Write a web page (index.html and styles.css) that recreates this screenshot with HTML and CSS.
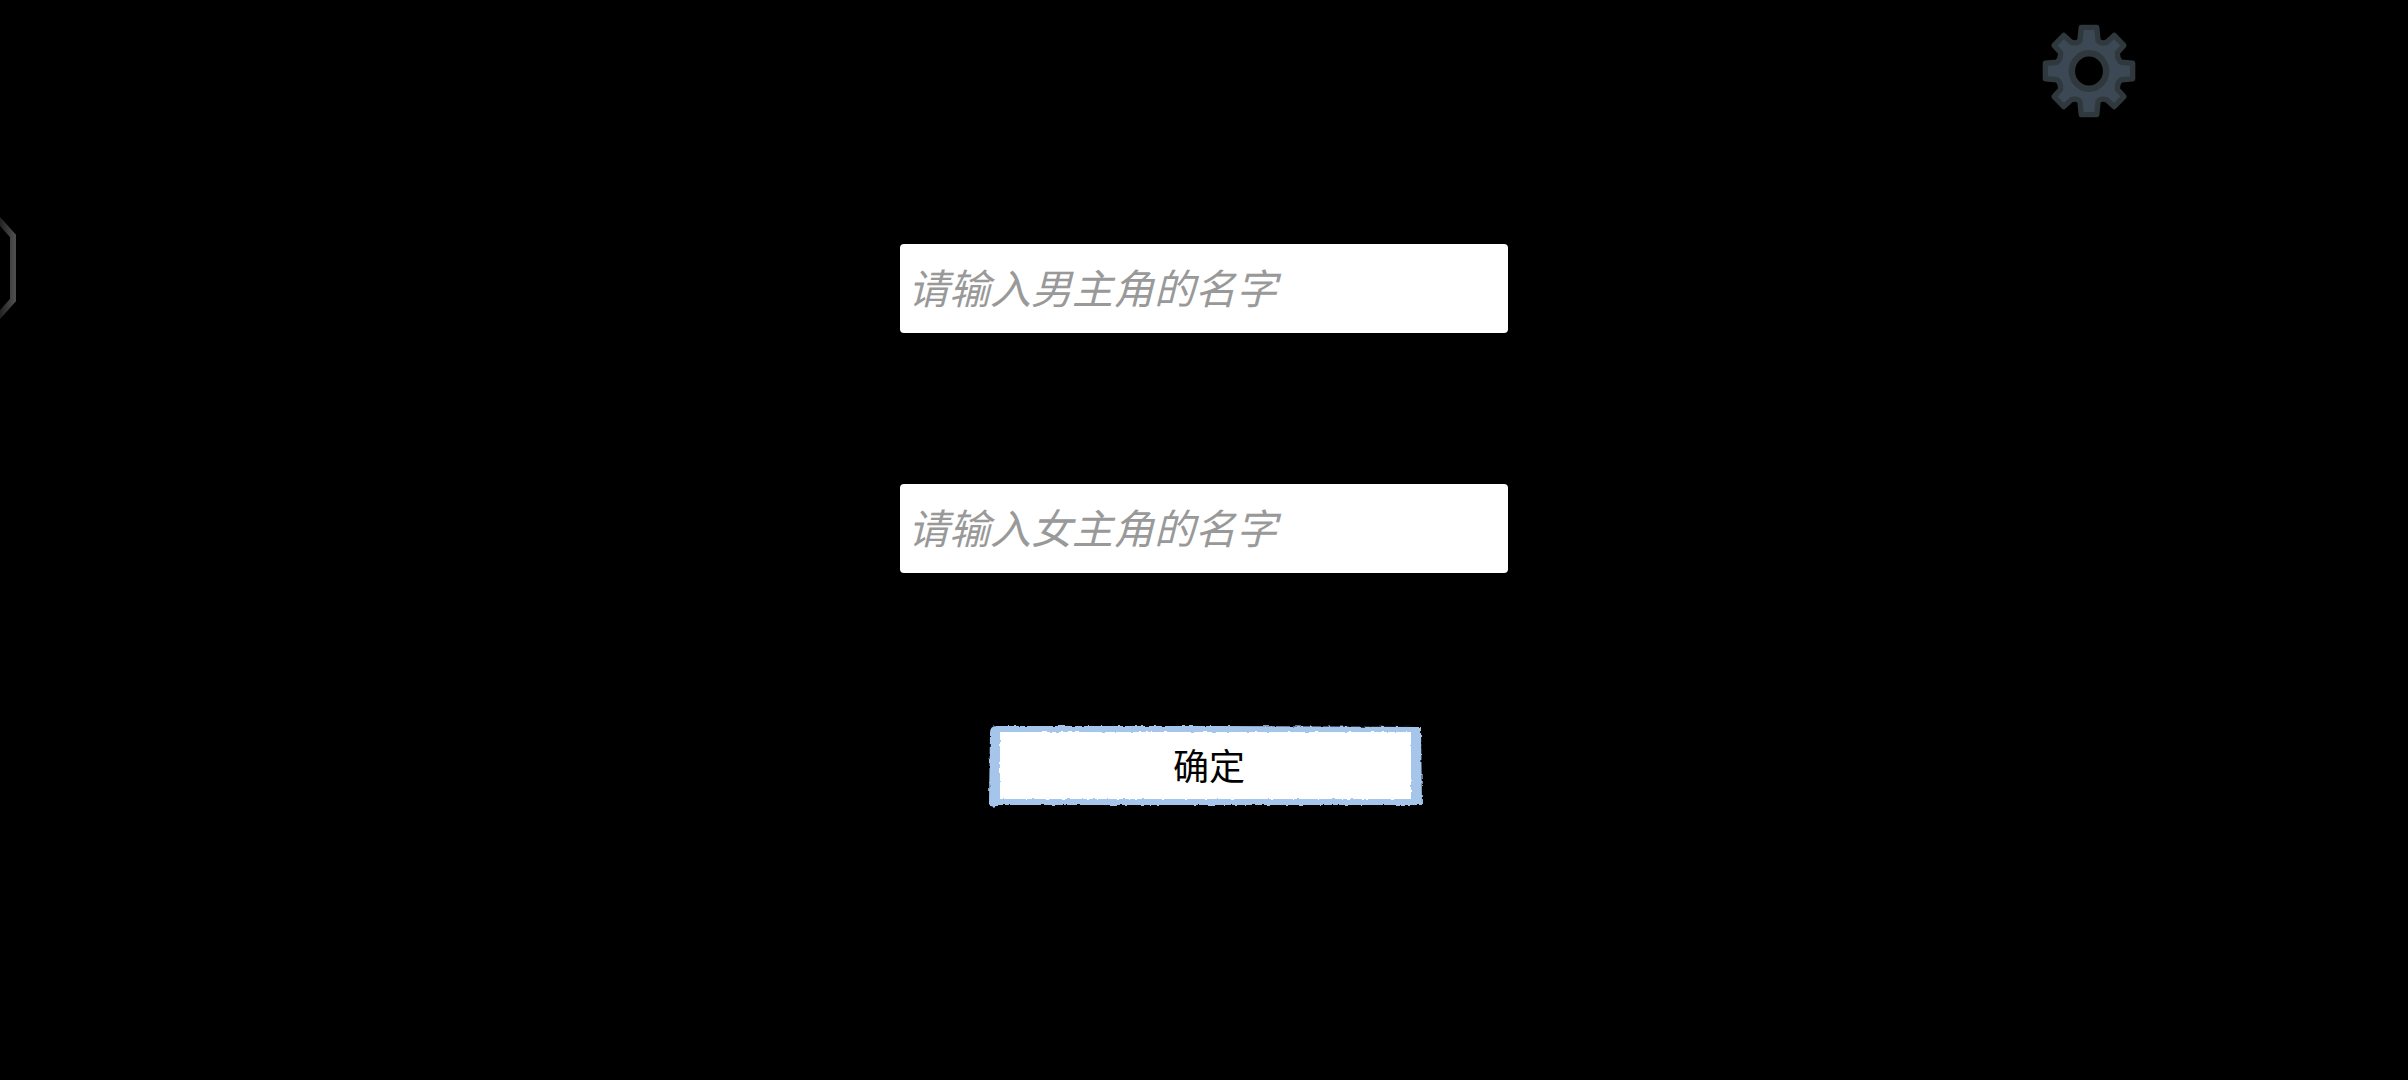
FILE: index.html
```html
<!DOCTYPE html>
<html lang="zh-CN">
<head>
    <meta charset="UTF-8">
    <meta name="viewport" content="width=device-width, initial-scale=1.0">
    <title>角色命名</title>
    <link rel="stylesheet" href="styles.css">
</head>
<body>
    <button class="settings-btn" type="button" aria-label="设置">
        <svg viewBox="-140 -140 280 280">
            <path class="gear-body" d="M-23-130 H23 L27-91 Q36-80 53-86 L75-106 L104-76 L85-55 Q83-35 96-26 L130-23 V23 L96 26 Q83 35 85 55 L104 76 L75 106 L53 86 Q36 80 27 91 L23 130 H-23 L-27 91 Q-36 80-53 86 L-75 106 L-104 76 L-85 55 Q-83 35-96 26 L-130 23 V-23 L-96-26 Q-83-35-85-55 L-104-76 L-75-106 L-53-86 Q-36-80-27-91 Z"/>
            <ellipse class="gear-hole" rx="51" ry="53"/>
        </svg>
    </button>

    <button class="side-handle" type="button" aria-label="展开菜单">
        <svg viewBox="0 0 18 108">
            <defs>
                <linearGradient id="handleFade" gradientUnits="userSpaceOnUse" x1="0" y1="0" x2="14" y2="0">
                    <stop offset="0" stop-color="#222"/>
                    <stop offset="1" stop-color="#4c4c4c"/>
                </linearGradient>
            </defs>
            <path d="M-4 3 L13 22 V86 L-4 105" fill="none" stroke="url(#handleFade)" stroke-width="6"/>
        </svg>
    </button>

    <form class="name-form">
        <input class="name-input" type="text" aria-label="男主角的名字" placeholder="请输入男主角的名字">
        <input class="name-input" type="text" aria-label="女主角的名字" placeholder="请输入女主角的名字">
        <button class="confirm-btn" type="button">
            <!-- hand-painted frame -->
            <svg class="frame" viewBox="0 0 436 84" preserveAspectRatio="none">
                <filter id="rough" x="-2%" y="-5%" width="104%" height="110%">
                    <feTurbulence type="fractalNoise" baseFrequency="0.2" numOctaves="2" seed="4"/>
                    <feDisplacementMap in="SourceGraphic" scale="3" xChannelSelector="R" yChannelSelector="G"/>
                    <feGaussianBlur stdDeviation="0.6"/>
                </filter>
                <g filter="url(#rough)">
                    <path fill="#a5c6ea" d="M10 2 Q4 2 4 9 L3 80 Q6 85 12 81 L220 81 L436 81 L435 3 L230 2 Z"/>
                    <path fill="#fff" d="M14 8 L425 8 L425 75 L14 75 Z"/>
                </g>
            </svg>
            <span class="label">确定</span>
        </button>
    </form>
</body>
</html>
```

FILE: styles.css
```css
* {
    box-sizing: border-box;
}

body {
    margin: 0;
    min-height: 100vh;
    background-color: #000;
    font-family: "Noto Sans CJK SC", sans-serif;
}

button {
    padding: 0;
    border: none;
    background: none;
    font-family: inherit;
    cursor: pointer;
}

svg {
    display: block;
    width: 100%;
    height: 100%;
}

/* Floating controls */
.settings-btn {
    position: absolute;
    top: 24px;
    right: 272px;
    width: 94px;
    height: 94px;
}

.gear-body {
    fill: #3c4854;
    stroke: #2f383d;
    stroke-width: 16;
    stroke-linejoin: round;
}

.gear-hole {
    fill: #000;
    stroke: #2f383d;
    stroke-width: 19;
}

.side-handle {
    position: absolute;
    top: 214px;
    left: 0;
    width: 18px;
    height: 108px;
}

/* Name form */
.name-form {
    display: flex;
    flex-direction: column;
    align-items: center;
    gap: 151px;
    padding: 244px 24px 24px;
}

.name-input {
    width: 100%;
    max-width: 608px;
    height: 89px;
    padding: 0 8px 6px;
    border: none;
    border-radius: 4px;
    background-color: #fff;
    color: #000;
    font-family: inherit;
    font-size: 41px;
}

.name-input::placeholder {
    color: #999;
    font-style: italic;
    opacity: 1;
}

.confirm-btn {
    position: relative;
    width: 436px;
    height: 84px;
    padding: 0 0 4px 10px;
    color: #000;
    font-size: 36px;
}

.frame {
    position: absolute;
    top: 0;
    left: 0;
    overflow: visible;
}

.label {
    position: relative;
}
```
